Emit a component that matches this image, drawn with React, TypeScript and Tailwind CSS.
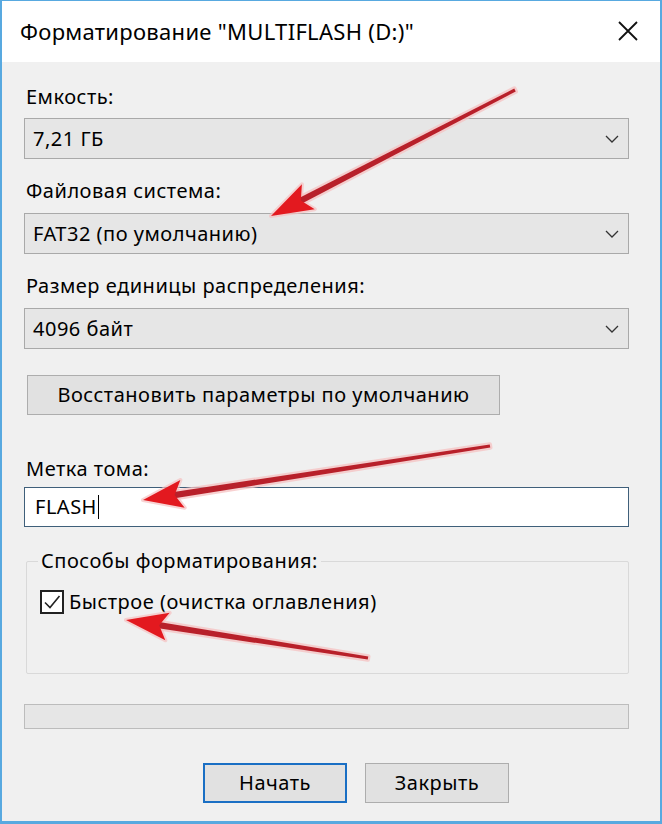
import React from "react";

const FONT = { fontFamily: '"Noto Sans", "Open Sans", sans-serif' };

type Arrow = { x1: number; y1: number; x2: number; y2: number; len: number; w: number };

const arrows: Arrow[] = [
  { x1: 515, y1: 90, x2: 271, y2: 216, len: 42, w: 14 },
  { x1: 490, y1: 446, x2: 143, y2: 500, len: 40, w: 14 },
  { x1: 368, y1: 658, x2: 126, y2: 620, len: 42, w: 14 },
];

function ArrowShape({ a }: { a: Arrow }) {
  const dx = a.x2 - a.x1;
  const dy = a.y2 - a.y1;
  const d = Math.hypot(dx, dy);
  const ux = dx / d;
  const uy = dy / d;
  const nx = -uy;
  const ny = ux;
  const bx = a.x2 - ux * a.len;
  const by = a.y2 - uy * a.len;
  const notchX = a.x2 - ux * (a.len * 0.8);
  const notchY = a.y2 - uy * (a.len * 0.8);
  const p1 = `${a.x2},${a.y2}`;
  const p2 = `${bx + nx * a.w},${by + ny * a.w}`;
  const p3 = `${notchX},${notchY}`;
  const p4 = `${bx - nx * a.w},${by - ny * a.w}`;
  const tw = 1.6;
  const hw = 3.2;
  const ex = notchX + ux * 2;
  const ey = notchY + uy * 2;
  const shaft = [
    `${a.x1 + nx * tw},${a.y1 + ny * tw}`,
    `${ex + nx * hw},${ey + ny * hw}`,
    `${ex - nx * hw},${ey - ny * hw}`,
    `${a.x1 - nx * tw},${a.y1 - ny * tw}`,
  ].join(" ");
  return (
    <g>
      <polygon points={shaft} fill="#f4b4b4" stroke="#f6c2c2" strokeWidth="4.5" strokeLinejoin="round" opacity="0.75" />
      <polygon points={`${p1} ${p2} ${p3} ${p4}`} fill="#f4b4b4" stroke="#f6c2c2" strokeWidth="4" strokeLinejoin="round" opacity="0.7" />
      <polygon points={shaft} fill="#b8202a" />
      <polygon points={`${p1} ${p2} ${p3} ${p4}`} fill="#e3191f" />
    </g>
  );
}

function Chevron() {
  return (
    <svg width="14" height="8" viewBox="0 0 14 8" className="shrink-0">
      <path d="M1 1 L7 7 L13 1" fill="none" stroke="#333" strokeWidth="1.3" />
    </svg>
  );
}

function Select({ value }: { value: string }) {
  return (
    <div className="h-[41px] w-full flex items-center justify-between pl-[8px] pr-[9px] bg-[#e6e6e6] border-[1.5px] border-[#a9a9a9]">
      <span className="text-[20px] tracking-[0.5px] leading-none text-black">{value}</span>
      <Chevron />
    </div>
  );
}

function Label({ children }: { children: React.ReactNode }) {
  return <div className="h-[24px] flex items-center text-[20px] tracking-[0.5px] leading-none text-black pl-[2px]">{children}</div>;
}

export default function App() {
  return (
    <div className="w-[662px] h-[824px] relative overflow-hidden bg-[#f0f0f0]" style={FONT}>
      <div className="w-full h-full flex flex-col border-x-2 border-b-[3px] border-t border-[#58a9e0]">
        {/* title bar */}
        <div className="h-[61px] bg-white flex items-center justify-between pl-[18px] pr-[20px] shrink-0">
          <span className="text-[22px] tracking-[0.3px] leading-none text-black pb-[2px]">Форматирование "MULTIFLASH (D:)"</span>
          <svg width="22" height="22" viewBox="0 0 22 22" className="mr-[1px] mb-[2px]">
            <path d="M2 2 L20 20 M20 2 L2 20" stroke="#111" strokeWidth="1.8" />
          </svg>
        </div>

        {/* body */}
        <div className="flex flex-col pl-[22px] pr-[31px] pt-[23px]">
          <Label>Емкость:</Label>
          <div className="mt-[9px]">
            <Select value="7,21 ГБ" />
          </div>
          <div className="mt-[20px]">
            <Label>Файловая система:</Label>
          </div>
          <div className="mt-[10px]">
            <Select value="FAT32 (по умолчанию)" />
          </div>
          <div className="mt-[20px]">
            <Label>Размер единицы распределения:</Label>
          </div>
          <div className="mt-[10px]">
            <Select value="4096 байт" />
          </div>
          <div className="mt-[26px] pl-[3px]">
            <div className="w-[473px] h-[40px] flex items-center justify-center bg-[#e1e1e1] border-[1.5px] border-[#adadad] text-[20px] tracking-[0.5px] leading-none text-black">
              Восстановить параметры по умолчанию
            </div>
          </div>
          <div className="mt-[42px]">
            <Label>Метка тома:</Label>
          </div>
          <div className="mt-[6px] h-[40px] w-full bg-white border-[1.5px] border-[#3f5f7a] flex items-center pl-[10px]">
            <span className="text-[20px] tracking-[0.5px] leading-none text-black">FLASH</span>
            <span className="w-[1.5px] h-[24px] bg-black ml-[1px]"></span>
          </div>

          {/* group box */}
          <div className="mt-[22px] relative ml-[2px]">
            <div className="mt-[12px] h-[113px] border border-[#d9d9d9] rounded-[2px] pt-[28px] pl-[13px]">
              <div className="flex items-center gap-[5px]">
                <div className="w-[24px] h-[24px] border-2 border-[#222] bg-white flex items-center justify-center">
                  <svg width="18" height="16" viewBox="0 0 18 16">
                    <path d="M2 8.5 L7 13.5 L16.5 2" fill="none" stroke="#222" strokeWidth="1.6" />
                  </svg>
                </div>
                <span className="text-[20px] tracking-[0.5px] leading-none text-black">Быстрое (очистка оглавления)</span>
              </div>
            </div>
            <div className="absolute left-[12px] top-0 h-[24px] px-[3px] bg-[#f0f0f0] flex items-center text-[20px] tracking-[0.5px] leading-none text-black">
              Способы форматирования:
            </div>
          </div>

          {/* progress bar */}
          <div className="mt-[30px] h-[25px] w-full bg-[#e6e6e6] border-[1.5px] border-[#bcbcbc]"></div>

          {/* buttons */}
          <div className="mt-[34px] flex gap-[18px] pl-[179px]">
            <div className="w-[144px] h-[40px] flex items-center justify-center bg-[#e1e1e1] border-2 border-[#1a6fc4] text-[20px] tracking-[0.5px] leading-none text-black">
              Начать
            </div>
            <div className="w-[144px] h-[40px] flex items-center justify-center bg-[#e1e1e1] border-[1.5px] border-[#adadad] text-[20px] tracking-[0.5px] leading-none text-black">
              Закрыть
            </div>
          </div>
        </div>
      </div>

      {/* red arrows overlay */}
      <svg className="absolute inset-0 pointer-events-none" width="662" height="824" viewBox="0 0 662 824">
        {arrows.map((a, i) => (
          <ArrowShape key={i} a={a} />
        ))}
      </svg>
    </div>
  );
}
